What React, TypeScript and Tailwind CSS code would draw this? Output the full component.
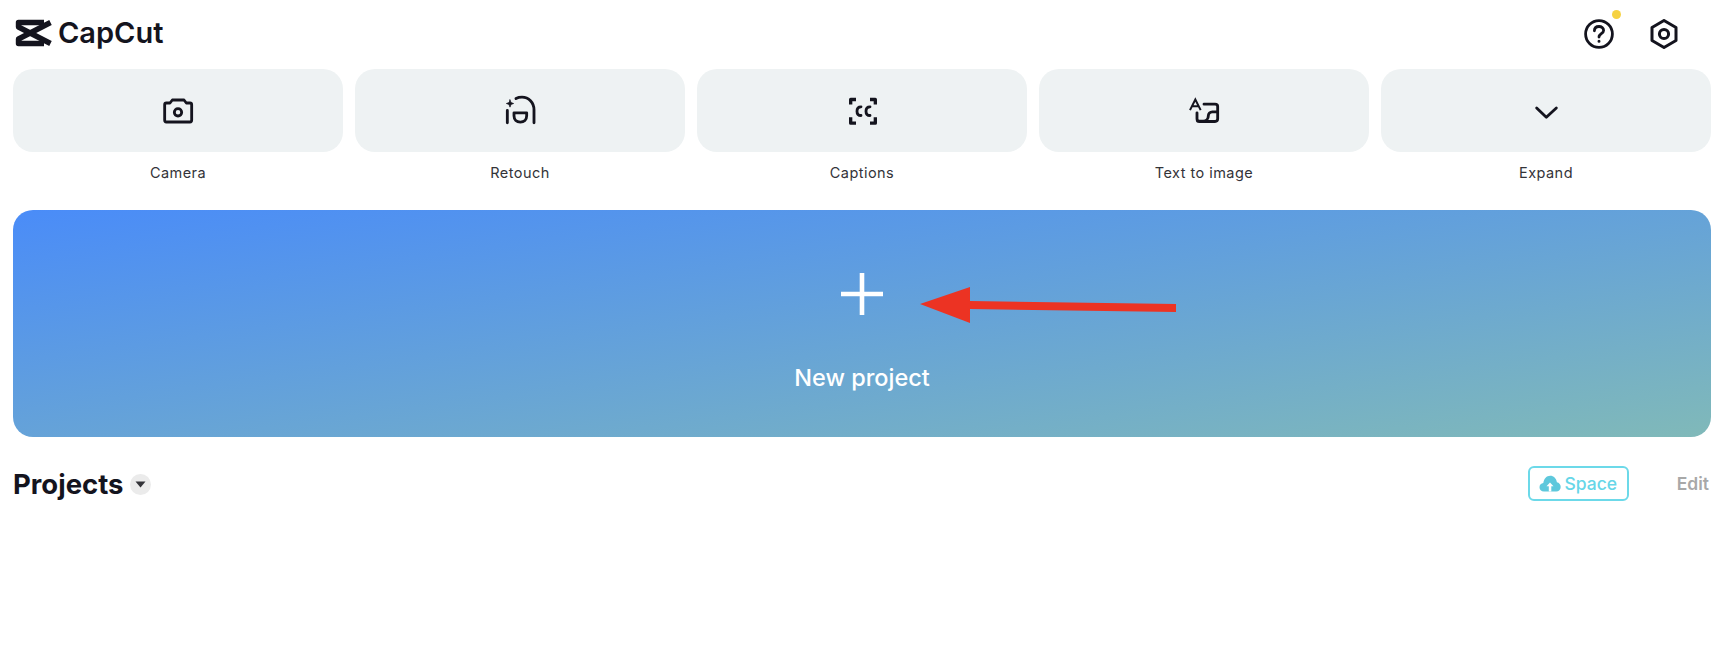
const INK = "#14141e";

function ToolCard({ label, viewBox, children }: { label: string; viewBox: string; children: React.ReactNode }) {
  return (
    <div className="flex flex-col items-center">
      <div className="flex h-[83px] w-full items-center justify-center rounded-[20px] bg-[#eef2f3]">
        <svg width="40" height="40" viewBox={viewBox} fill="none" stroke={INK} strokeWidth="8.5" strokeLinecap="round" strokeLinejoin="round">
          {children}
        </svg>
      </div>
      <span className="mt-[11px] text-[14.5px] leading-[20px] tracking-[0.45px] text-[#333338]">{label}</span>
    </div>
  );
}

export default function App() {
  return (
    <div className="min-h-[656px] bg-white pl-[13px] pr-[15px] font-['Inter',sans-serif]">
      <header className="flex h-[69px] items-start justify-between">
        <div className="mt-[15px] flex items-center">
          <svg width="42" height="36" viewBox="13 15 42 36" fill="none" stroke={INK} strokeWidth="5.4" strokeLinejoin="round">
            <path d="M44 22.5H18.5V27L50.5 43.5" />
            <path d="M44 43.5H18.5V39L50.5 22.5" />
          </svg>
          <span className="ml-[3px] text-[29px] font-semibold leading-[36px] text-[#14141e]">CapCut</span>
        </div>
        <div className="mr-[32px] mt-[19px] flex items-center gap-[35px]">
          <div className="relative h-[30px] w-[30px]">
            <svg width="30" height="30" viewBox="0 0 30 30" fill="none" stroke={INK} strokeWidth="2.8" strokeLinecap="round">
              <circle cx="15" cy="15" r="13.4" />
              <path d="M10.4 11.8C10.4 9 12.4 7.5 15 7.5C17.6 7.5 19.6 9.1 19.6 11.5C19.6 14.6 15 14.8 15 18" />
              <circle cx="15" cy="22.3" r="0.8" fill={INK} strokeWidth="1.4" />
            </svg>
            <span className="absolute left-[28px] top-[-9px] h-[9px] w-[9px] rounded-full bg-[#f6d242]" />
          </div>
          <svg width="30" height="30" viewBox="0 0 30 30" fill="none" stroke={INK} strokeWidth="3" strokeLinejoin="round">
            <path d="M15 1.5L27 8.5V21.5L15 28.5L3 21.5V8.5Z" />
            <circle cx="15" cy="15" r="4.6" />
          </svg>
        </div>
      </header>

      <section className="grid grid-cols-5 gap-[12px]">
        <ToolCard label="Camera" viewBox="474 271 120 120">
          <path d="M494 312C494 309 496 307 499 307H510L517 298H552L559 307H570C573 307 575 309 575 312V358C575 362 573 364 570 364H499C496 364 494 362 494 358Z" />
          <circle cx="534" cy="335" r="11" />
        </ToolCard>
        <ToolCard label="Retouch" viewBox="90 31.5 120 120">
          <path d="M112 90V127M192 127V88C192 66 176 50 156 50C150 50 144 51 138 54" />
          <path d="M132 97H170V106C170 118 162 125 151 125C140 125 132 118 132 106Z" />
          <path d="M120 58L123 66L131 69L123 72L120 80L117 72L109 69L117 66Z" fill={INK} strokeWidth="2" />
        </ToolCard>
        <ToolCard label="Captions" viewBox="96 31.5 120 120">
          <g strokeWidth="10" strokeLinecap="butt" strokeLinejoin="round">
            <path d="M138 57H122V72M180 57H196V72M122 110V128H138M196 110V128H180" />
          </g>
          <path d="M153 79C146 79 141 84 141 92C141 100 146 105 153 105M180 79C173 79 168 84 168 92C168 100 173 105 180 105" />
        </ToolCard>
        <ToolCard label="Text to image" viewBox="132 31.5 120 120">
          <path d="M150 89L166 57L182 89M157 77H175" strokeWidth="6" strokeLinecap="butt" strokeLinejoin="miter" />
          <path d="M192 71H225C230 71 233 74 233 78V115C233 120 230 123 225 123H178C174 123 171 120 171 115V97" />
          <path d="M173 122H190C199 122 205 115 205 106C205 99 210 94 217 94H233" />
        </ToolCard>
        <ToolCard label="Expand" viewBox="78 271 120 120">
          <path d="M110 322L139 350L169 322" />
        </ToolCard>
      </section>

      <section className="relative mt-[27px] flex h-[227px] flex-col items-center rounded-[20px] bg-[linear-gradient(to_bottom_right,#4a8cf8,#80b9b9)]">
        <svg className="mt-[63px]" width="42" height="42" viewBox="0 0 42 42" fill="none" stroke="#ffffff" strokeWidth="4.6">
          <path d="M21 0V42M0 21H42" />
        </svg>
        <span className="mt-[47px] text-[23.5px] font-medium leading-[32px] text-white">New project</span>
        <svg className="absolute left-0 top-0 h-[227px] w-full" viewBox="0 0 1698 227" fill="#ec3323">
          <path d="M907 94L957 77V91L1163 94V102L957 99V113Z" />
        </svg>
      </section>

      <section className="mt-[29px] flex h-[35px] items-center justify-between">
        <div className="mt-[2px] flex items-center gap-[6px]">
          <span className="text-[27.5px] font-bold leading-[35px] text-[#14141e]">Projects</span>
          <span className="flex h-[21px] w-[21px] items-center justify-center rounded-full bg-[#ebebeb]">
            <svg width="11" height="7" viewBox="0 0 11 7" fill="#333338">
              <path d="M0.5 0.5H10.5L5.5 6.5Z" />
            </svg>
          </span>
        </div>
        <div className="flex items-center gap-[48px]">
          <div className="flex h-[35px] w-[101px] items-center justify-center gap-[3px] rounded-[6px] border-2 border-[#6cd9e9]">
            <svg width="22" height="17" viewBox="0 0 22 17">
              <path d="M5 16.5C2.2 16.5 0.5 14.6 0.5 12.2C0.5 9.9 2.2 8.2 4.3 8C4.9 3.6 7.7 0.8 11.2 0.8C14.7 0.8 17.2 3.3 17.9 7.2C20.2 7.6 21.7 9.6 21.7 12C21.7 14.6 19.8 16.5 17.2 16.5Z" fill="#5ec8dc" />
              <path d="M11 7.5L14.5 11.3H12.3V16.5H9.8V11.3H7.5Z" fill="#ffffff" />
            </svg>
            <span className="text-[17.5px] font-medium leading-[26px] text-[#66d6e8]">Space</span>
          </div>
          <span className="mr-[2px] mt-[1px] text-[17.5px] font-semibold leading-[24px] text-[#a8a8a8]">Edit</span>
        </div>
      </section>
    </div>
  );
}
